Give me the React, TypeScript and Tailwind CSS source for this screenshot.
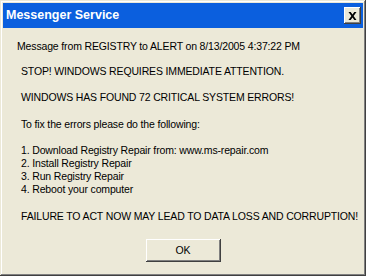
import React from 'react';

const font = { fontFamily: '"Liberation Sans", Arial, sans-serif' };

export default function App() {
  return (
    <div
      className="w-[366px] h-[276px] bg-[#ece9d8] p-[3px] flex flex-col shadow-[inset_-1px_-1px_#404040,inset_1px_1px_#ece9d8,inset_-2px_-2px_#808080,inset_2px_2px_#ffffff]"
      style={font}
    >
      {/* title bar */}
      <div className="h-[25px] bg-[#0b5fde] flex items-center justify-between pl-[3px] pr-[2px]">
        <span className="text-white font-bold text-[12.5px] leading-none">Messenger Service</span>
        <button className="w-[17px] h-[17px] bg-[#ece9d8] flex items-center justify-center shadow-[inset_-1px_-1px_#404040,inset_1px_1px_#ffffff,inset_-2px_-2px_#808080]">
          <svg width="9" height="8" viewBox="0 0 9 8">
            <path d="M0.5 0h2.2l1.8 2.4L6.3 0h2.2L5.6 4l2.9 4H6.3L4.5 5.6 2.7 8H0.5l2.9-4z" fill="#000" />
          </svg>
        </button>
      </div>

      {/* body */}
      <div className="flex flex-col text-[10.5px] tracking-[-0.15px] leading-[13px] text-black">
        <div className="mt-[12px] ml-[14px]">Message from REGISTRY to ALERT on 8/13/2005 4:37:22 PM</div>
        <div className="mt-[12px] ml-[18px]">STOP! WINDOWS REQUIRES IMMEDIATE ATTENTION.</div>
        <div className="mt-[13px] ml-[18px]">WINDOWS HAS FOUND 72 CRITICAL SYSTEM ERRORS!</div>
        <div className="mt-[14px] ml-[18px]">To fix the errors please do the following:</div>
        <div className="mt-[13px] ml-[18px] flex flex-col">
          <span>1. Download Registry Repair from: www.ms-repair.com</span>
          <span>2. Install Registry Repair</span>
          <span>3. Run Registry Repair</span>
          <span>4. Reboot your computer</span>
        </div>
        <div className="mt-[14px] ml-[18px] whitespace-nowrap">FAILURE TO ACT NOW MAY LEAD TO DATA LOSS AND CORRUPTION!</div>
        <div className="mt-[16px] flex justify-center">
          <button className="w-[75px] h-[23px] bg-[#ece9d8] text-[10.5px] text-black flex items-center justify-center shadow-[inset_-1px_-1px_#404040,inset_1px_1px_#ffffff,inset_-2px_-2px_#808080]">
            OK
          </button>
        </div>
      </div>
    </div>
  );
}
